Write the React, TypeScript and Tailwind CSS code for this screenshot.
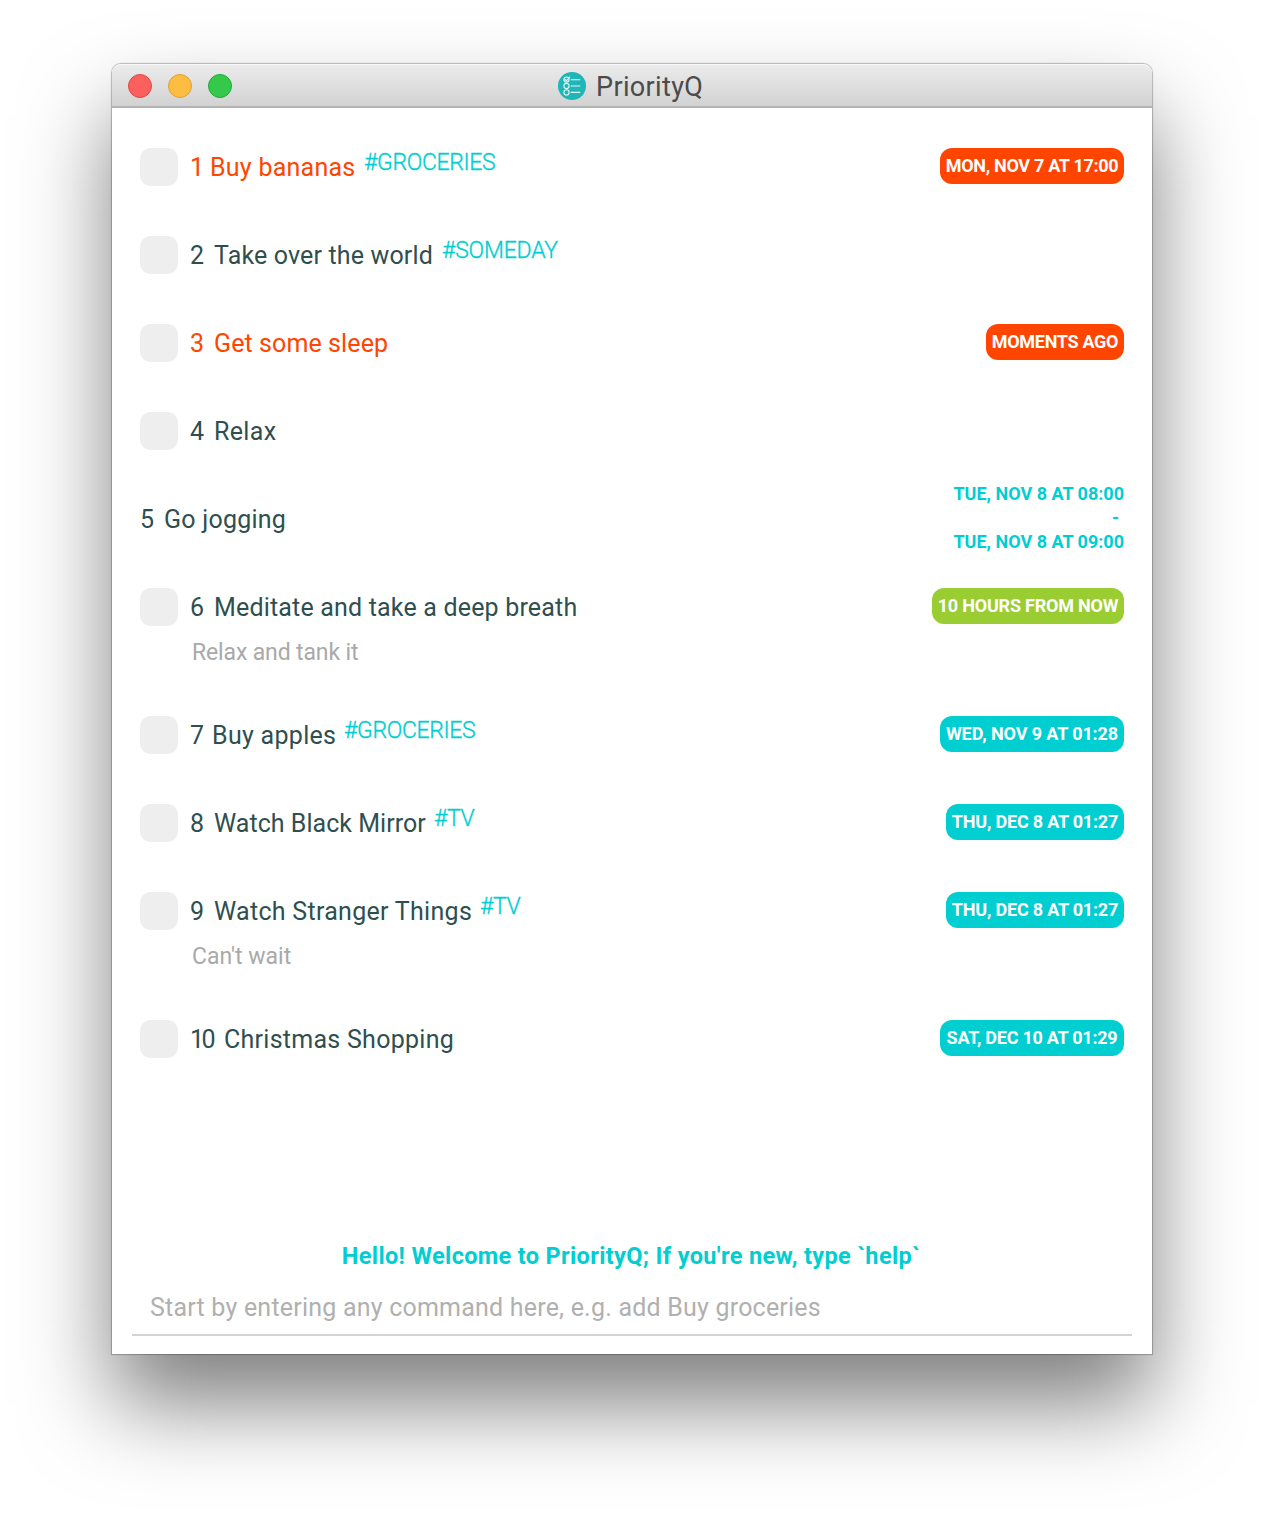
import React from "react";

type Tone = "overdue" | "soon" | "later";

interface Task {
  id: number;
  title: string;
  titleClass: string;
  tag?: string;
  tagClass?: string;
  note?: string;
  noteClass?: string;
  due?: string;
  dueClass?: string;
  tone?: Tone;
  event?: [string, string];
}

const toneClass: Record<Tone, string> = {
  overdue: "bg-[#ff4500]",
  soon: "bg-[#9acd32]",
  later: "bg-[#00ced1]",
};

const tasks: Task[] = [
  { id: 1, title: "Buy bananas", titleClass: "w-[145px] tracking-[0.25px]", tag: "#GROCERIES", tagClass: "tracking-[-0.35px]", due: "MON, NOV 7 AT 17:00", dueClass: "w-[184px] tracking-[-0.3px]", tone: "overdue" },
  { id: 2, title: "Take over the world", titleClass: "w-[219px] tracking-[0.15px]", tag: "#SOMEDAY", tagClass: "tracking-[-0.2px]" },
  { id: 3, title: "Get some sleep", titleClass: "tracking-[0.1px]", due: "MOMENTS AGO", dueClass: "w-[138px] tracking-[-0.3px]", tone: "overdue" },
  { id: 4, title: "Relax", titleClass: "tracking-[0.35px]" },
  { id: 5, title: "Go jogging", titleClass: "tracking-[0.24px]", event: ["TUE, NOV 8 AT 08:00", "TUE, NOV 8 AT 09:00"] },
  { id: 6, title: "Meditate and take a deep breath", titleClass: "tracking-[0.18px]", note: "Relax and tank it", noteClass: "tracking-[-0.14px]", due: "10 HOURS FROM NOW", dueClass: "w-[192px] tracking-[-0.2px]", tone: "soon" },
  { id: 7, title: "Buy apples", titleClass: "w-[124px] tracking-[0.3px]", tag: "#GROCERIES", tagClass: "-ml-px tracking-[-0.35px]", due: "WED, NOV 9 AT 01:28", dueClass: "w-[184px] tracking-[-0.1px]", tone: "later" },
  { id: 8, title: "Watch Black Mirror", titleClass: "w-[212px] tracking-[0.03px]", tag: "#TV", tagClass: "-ml-px tracking-[-0.4px]", due: "THU, DEC 8 AT 01:27", dueClass: "w-[178px] tracking-[-0.2px]", tone: "later" },
  { id: 9, title: "Watch Stranger Things", titleClass: "w-[258px] tracking-[0.29px]", tag: "#TV", tagClass: "-ml-px tracking-[-0.4px]", note: "Can't wait", noteClass: "", due: "THU, DEC 8 AT 01:27", dueClass: "w-[178px] tracking-[-0.2px]", tone: "later" },
  { id: 10, title: "Christmas Shopping", titleClass: "tracking-[0.27px]", due: "SAT, DEC 10 AT 01:29", dueClass: "w-[184px] tracking-[-0.25px]", tone: "later" },
];

const numberClass: Record<number, string> = {
  1: "w-[20px]",
  7: "w-[22px]",
  10: "w-[34px] tracking-[-2.5px]",
};

function Logo() {
  return (
    <svg width="28" height="28" viewBox="0 0 28 28" fill="none" stroke="#e4f7f7" strokeWidth="1.1">
      <circle cx="14" cy="14" r="14" fill="#20b5b7" stroke="none" />
      <circle cx="8.5" cy="7.6" r="2.6" />
      <path d="M6.6 6.8l1.8 2 3.5-4.1M12.7 7.7h9.6M12.7 14h9.6M12.7 20.4h9.6" />
      <circle cx="8.5" cy="14" r="2.6" />
      <circle cx="8.5" cy="20.4" r="2.6" />
    </svg>
  );
}

function TitleBar() {
  return (
    <header className="relative flex h-11 items-center justify-center rounded-t-[9px] border-b-2 border-[#b3b3b3] bg-linear-to-b from-[#ececec] to-[#d2d2d2] shadow-[inset_0_1px_0_#f6f6f6]">
      <div className="absolute left-4 top-[10px] flex gap-4">
        <span className="size-6 rounded-full border border-[#e0484a] bg-[#fc605c]" />
        <span className="size-6 rounded-full border border-[#dfa035] bg-[#fdbd41]" />
        <span className="size-6 rounded-full border border-[#23a837] bg-[#35c94b]" />
      </div>
      <div className="mt-[2px] flex w-[148px] items-center gap-[10px]">
        <Logo />
        <span className="whitespace-nowrap pt-px text-[27px] leading-7 tracking-[0.35px] text-[#4b4b4b]">PriorityQ</span>
      </div>
    </header>
  );
}

function TaskRow({ task }: { task: Task }) {
  return (
    <li className="flex items-start justify-between">
      <div className="flex items-start">
        {!task.event && <span className="mr-3 size-[38px] rounded-[11px] bg-[#eeeeee]" />}
        <div className={task.note ? "h-[78px]" : "h-[38px]"}>
          <div className={`flex h-10 items-center whitespace-nowrap text-[25px] ${task.tone === "overdue" ? "text-[#ff4500]" : "text-[#2f4f4f]"}`}>
            <span className={numberClass[task.id] ?? "w-6"}>{task.id}</span>
            <span className={task.titleClass}>{task.title}</span>
            {task.tag && (
              <span className="ml-[9px] pb-[10px] text-[23px] font-light text-[#00ced1] [-webkit-text-stroke:0.35px_#00ced1]">
                <span className={task.tagClass}>{task.tag}</span>
              </span>
            )}
          </div>
          {task.note && <p className={`ml-[2px] mt-2 text-[23px] leading-[34px] text-[#a9a9a9] ${task.noteClass}`}>{task.note}</p>}
        </div>
      </div>
      {task.due && task.tone && (
        <span className={`flex h-9 items-center justify-center whitespace-nowrap rounded-xl pb-[2px] text-[18px] font-bold text-white ${toneClass[task.tone]} ${task.dueClass}`}>
          {task.due}
        </span>
      )}
      {task.event && (
        <div className="-my-[18px] flex flex-col items-end text-[18px] font-bold leading-6 text-[#00ced1]">
          <span>{task.event[0]}</span>
          <span className="mr-[5px]">-</span>
          <span>{task.event[1]}</span>
        </div>
      )}
    </li>
  );
}

export default function App() {
  return (
    <div className="h-[1514px] w-[1264px] overflow-hidden bg-white px-28 pt-16 font-['Roboto',sans-serif]">
      <main className="flex h-[1290px] w-[1040px] flex-col rounded-t-[9px] bg-white shadow-[0_0_1px_1px_rgba(0,0,0,0.25),0_50px_88px_rgba(0,0,0,0.5)]">
        <TitleBar />
        <ul className="flex flex-1 flex-col gap-[50px] px-7 pt-10">
          {tasks.map((task) => (
            <TaskRow key={task.id} task={task} />
          ))}
        </ul>
        <footer className="mx-5 mb-[18px]">
          <p className="-ml-[2px] text-center text-[23.5px] font-bold leading-8 tracking-[0.35px] text-[#00ced1]">
            Hello! Welcome to PriorityQ; If you're new, type `help`
          </p>
          <div className="mt-[7px] flex h-[57px] items-center border-b-2 border-[#d3d3d3] px-[18px]">
            <input className="w-full pt-[2px] text-[25px] tracking-[0.21px] outline-none placeholder:text-[#b0b0b0]" placeholder="Start by entering any command here, e.g. add Buy groceries" />
          </div>
        </footer>
      </main>
    </div>
  );
}
